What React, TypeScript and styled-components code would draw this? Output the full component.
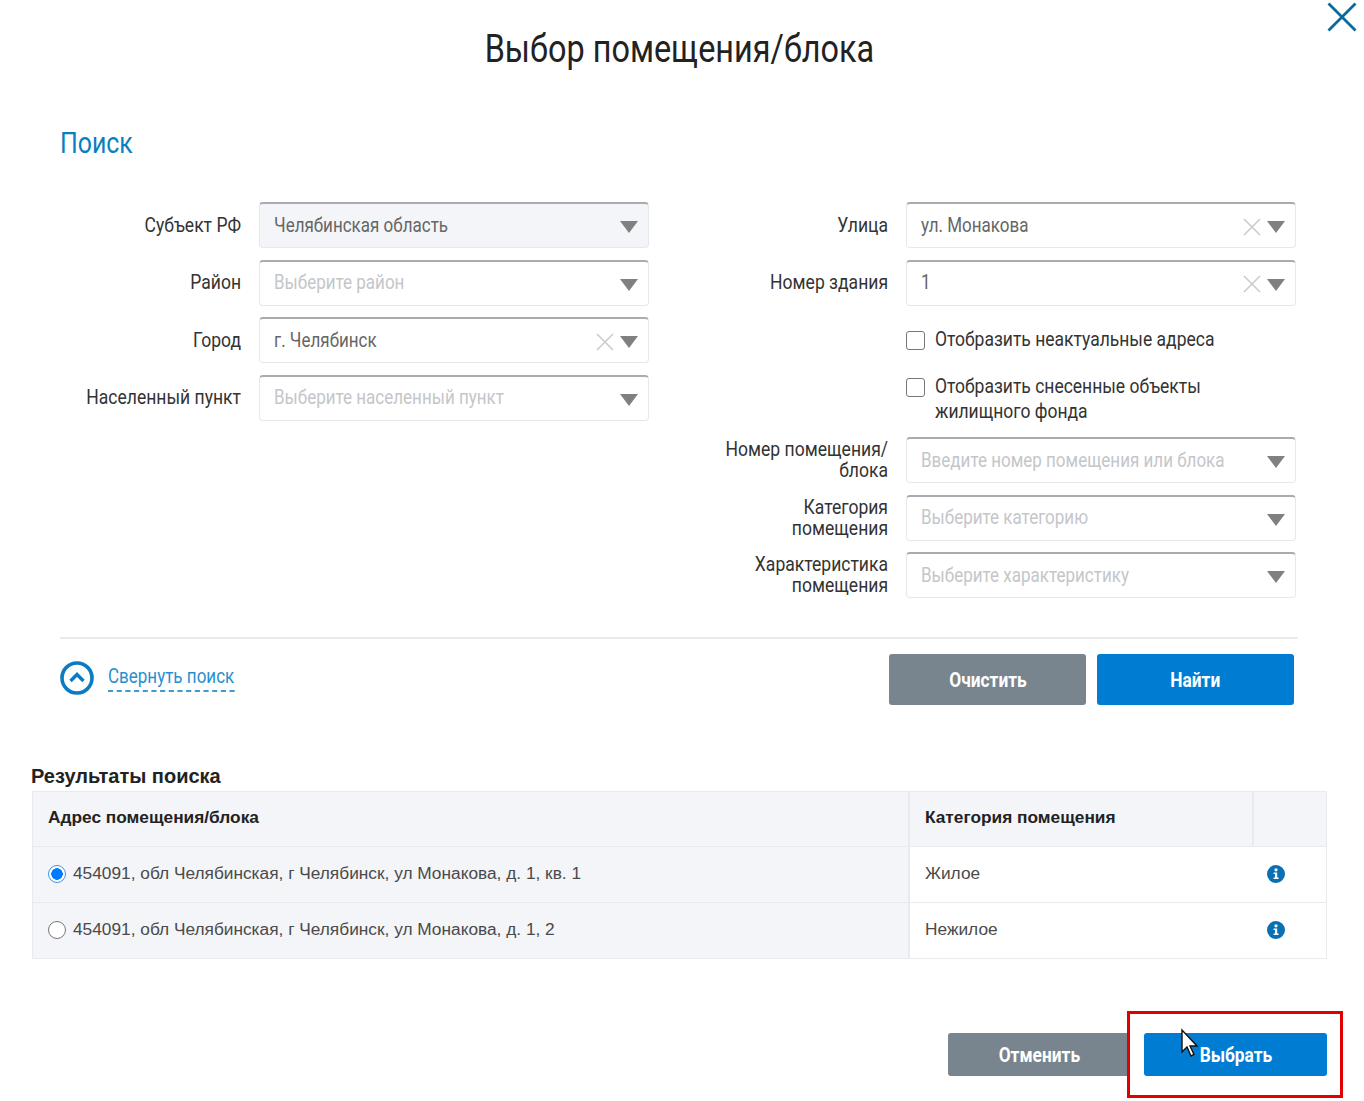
import { Fragment } from 'react';
import styled, { createGlobalStyle } from 'styled-components';

const GlobalStyle = createGlobalStyle`
  html, body {
    margin: 0;
    padding: 0;
    background: #fff;
  }
  body {
    font-family: Roboto, "Liberation Sans", sans-serif;
    color: #333;
  }
`;

const Page = styled.div`
  position: relative;
  width: 1364px;
  height: 1101px;
  overflow: hidden;
  background: #fff;
`;

const CloseButton = styled.div`
  position: absolute;
  top: 2px;
  right: 7px;
  width: 30px;
  height: 30px;
  color: #0b6a9b;
`;

// the screenshot was squeezed horizontally, so the text is narrowed to match
const Title = styled.h1`
  margin: 0;
  height: 100px;
  padding: 27px 6px 0 0;
  box-sizing: border-box;
  text-align: center;
  font: 400 38px/44px Roboto, sans-serif;
  color: #222;
  transform: scaleX(0.853);
`;

const SearchSection = styled.section`
  margin: 0 66px 0 60px;
`;

const SectionTitle = styled.h2`
  margin: 0;
  height: 102px;
  padding-top: 25px;
  box-sizing: border-box;
  font: 400 29px/36px Roboto, sans-serif;
  color: #0a7fc0;
  transform: scaleX(0.857);
  transform-origin: left center;
`;

const FormGrid = styled.div`
  display: grid;
  grid-template-columns: 588px 1fr;
  column-gap: 59px;
  height: 435px;
`;

const Column = styled.div`
  display: flex;
  flex-direction: column;
`;

const FieldRow = styled.div`
  display: flex;
  align-items: center;
  height: 46px;
  margin-bottom: 11.6px;
`;

const Label = styled.label`
  width: 205px;
  margin: 0 18px 0 -24px;
  flex: none;
  text-align: right;
  font: 400 21px/21px Roboto, sans-serif;
  color: #333;
  transform: scaleX(0.835);
  transform-origin: right center;
`;

const SelectBox = styled.div<{ $disabled?: boolean }>`
  flex: none;
  display: flex;
  align-items: center;
  width: 390px;
  height: 46px;
  box-sizing: border-box;
  padding: 0 10px 0 14px;
  border: 1px solid #e6e8ec;
  border-top: 2px solid #a9abb0;
  border-radius: 4px;
  background: ${({ $disabled }) => ($disabled ? '#f3f5f9' : '#fff')};
`;

const Value = styled.span<{ $placeholder?: boolean }>`
  flex: 1;
  min-width: 0;
  padding-bottom: 2px;
  white-space: nowrap;
  font: 400 20px/22px Roboto, sans-serif;
  color: ${({ $placeholder }) => ($placeholder ? '#c4c6ca' : '#666')};
  transform: scaleX(0.85);
  transform-origin: left center;
`;

const ClearIcon = styled.svg`
  width: 20px;
  height: 20px;
  margin: 2px 5px 0 0;
  color: #c9cbce;
`;

const Arrow = styled.span`
  width: 0;
  height: 0;
  margin-top: 3px;
  border-left: 9px solid transparent;
  border-right: 9px solid transparent;
  border-top: 12px solid #808080;
`;

const CheckRow = styled.label<{ $top: number; $gap: number }>`
  display: flex;
  align-items: flex-start;
  margin: ${({ $top }) => $top}px 0 ${({ $gap }) => $gap}px 199px;
`;

const CheckText = styled.span`
  white-space: nowrap;
  font: 400 21px/25px Roboto, sans-serif;
  color: #333;
  transform: scaleX(0.833);
  transform-origin: left center;
`;

const CheckBox = styled.span`
  flex: none;
  width: 17px;
  height: 17px;
  margin: 4px 10px 0 0;
  border: 1px solid #767676;
  border-radius: 3px;
`;

const Divider = styled.hr`
  margin: 0;
  border: none;
  border-top: 2px solid #e8eaed;
`;

const ActionBar = styled.div`
  display: flex;
  align-items: center;
  padding-top: 15px;
  height: 51px;
`;

const Collapse = styled.div`
  display: flex;
  align-items: center;
  gap: 14px;
  flex: 1;
  margin-top: -3px;
`;

const CollapseLink = styled.a`
  padding-bottom: 3px;
  border-bottom: 2px dashed #3d9ad1;
  font: 400 20px/22px Roboto, sans-serif;
  color: #2a8fcc;
  transform: scaleX(0.85);
  transform-origin: left center;
`;

const ButtonGroup = styled.div`
  display: flex;
  gap: 11px;
  margin-right: 4px;
`;

const Button = styled.button<{ $primary?: boolean; $w: number; $h: number }>`
  width: ${({ $w }) => $w}px;
  height: ${({ $h }) => $h}px;
  padding: 0;
  border: none;
  border-radius: 3px;
  background: ${({ $primary }) => ($primary ? '#007dd3' : '#78858e')};
  color: #fff;
`;

const ButtonText = styled.span`
  display: inline-block;
  font: 700 21px/24px Roboto, sans-serif;
  transform: scaleX(0.825);
`;

const Results = styled.section`
  margin: 58px 37px 0 31px;
`;

const ResultsTitle = styled.h3`
  margin: 0;
  height: 28px;
  font: 700 20px/26px "Liberation Sans", Arial, sans-serif;
  color: #222;
`;

const Table = styled.div`
  display: grid;
  grid-template-columns: 877px 344px 1fr;
  grid-template-rows: 55px 56px 56px;
  margin-left: 1px;
  border: 1px solid #e8eaee;
  border-top: none;
  font: 400 17.3px/20px "Liberation Sans", Arial, sans-serif;
`;

const Cell = styled.div<{ $head?: boolean; $tint?: boolean; $plain?: boolean }>`
  display: flex;
  align-items: center;
  padding: 0 14px 4px 15px;
  box-sizing: border-box;
  border-top: 1px solid #e8eaee;
  border-right: ${({ $plain }) => ($plain ? 'none' : '2px solid #e8eaee')};
  background: ${({ $head, $tint }) => ($head || $tint ? '#f3f5f9' : '#fff')};
  color: ${({ $head }) => ($head ? '#222' : '#4a4a4a')};
  font-weight: ${({ $head }) => ($head ? 700 : 400)};
`;

const Radio = styled.span<{ $checked?: boolean }>`
  flex: none;
  width: 18px;
  height: 18px;
  margin: 2px 7px 0 0;
  box-sizing: border-box;
  border-radius: 50%;
  background: ${({ $checked }) =>
    $checked ? 'radial-gradient(circle, #007bff 0 5.5px, #fff 6px)' : '#fff'};
  border: ${({ $checked }) => ($checked ? '1.5px solid #3a95e8' : '1px solid #767676')};
`;

const InfoIcon = styled.svg`
  width: 18px;
  height: 18px;
  margin: 2px 0 0 -2px;
  color: #0b6fb3;
`;

const Footer = styled.div`
  display: flex;
  justify-content: flex-end;
  gap: 14px;
  margin: 74px 37px 0 0;
`;

const Highlight = styled.div`
  position: absolute;
  top: 1011px;
  left: 1127px;
  width: 216px;
  height: 87px;
  box-sizing: border-box;
  border: 3px solid #e10000;
`;

const Cursor = styled.svg`
  position: absolute;
  top: 1028px;
  left: 1180px;
  width: 20px;
  height: 30px;
`;

const Close = () => (
  <svg viewBox="0 0 30 30" width="30" height="30" fill="none" stroke="currentColor" strokeWidth="2.8">
    <path d="M1.5 1.5 28.5 28.5M28.5 1.5 1.5 28.5" />
  </svg>
);

const Select = ({
  value,
  placeholder,
  clear,
  disabled,
}: {
  value?: string;
  placeholder?: string;
  clear?: boolean;
  disabled?: boolean;
}) => (
  <SelectBox $disabled={disabled}>
    <Value $placeholder={!value}>{value || placeholder}</Value>
    {clear && (
      <ClearIcon viewBox="0 0 20 20" fill="none" stroke="currentColor" strokeWidth="1.6">
        <path d="M2 2 18 18M18 2 2 18" />
      </ClearIcon>
    )}
    <Arrow />
  </SelectBox>
);

const Info = () => (
  <InfoIcon viewBox="0 0 18 18">
    <circle cx="9" cy="9" r="9" fill="currentColor" />
    <circle cx="9" cy="4.8" r="1.6" fill="#fff" />
    <path d="M6.6 7.4h3.6v5h1.4v1.6H6.6v-1.6H8V9H6.6z" fill="#fff" />
  </InfoIcon>
);

const leftFields = [
  { label: 'Субъект РФ', value: 'Челябинская область', disabled: true },
  { label: 'Район', placeholder: 'Выберите район' },
  { label: 'Город', value: 'г. Челябинск', clear: true },
  { label: 'Населенный пункт', placeholder: 'Выберите населенный пункт' },
];

const rightTop = [
  { label: 'Улица', value: 'ул. Монакова', clear: true },
  { label: 'Номер здания', value: '1', clear: true },
];

const rightBottom = [
  { label: 'Номер помещения/ блока', placeholder: 'Введите номер помещения или блока' },
  { label: 'Категория помещения', placeholder: 'Выберите категорию' },
  { label: 'Характеристика помещения', placeholder: 'Выберите характеристику' },
];

const rows = [
  { address: '454091, обл Челябинская, г Челябинск, ул Монакова, д. 1, кв. 1', category: 'Жилое', checked: true },
  { address: '454091, обл Челябинская, г Челябинск, ул Монакова, д. 1, 2', category: 'Нежилое' },
];

export default function App() {
  return (
    <Page>
      <GlobalStyle />
      <CloseButton>
        <Close />
      </CloseButton>
      <Title>Выбор помещения/блока</Title>

      <SearchSection>
        <SectionTitle>Поиск</SectionTitle>
        <FormGrid>
          <Column>
            {leftFields.map((f) => (
              <FieldRow key={f.label}>
                <Label>{f.label}</Label>
                <Select value={f.value} placeholder={f.placeholder} clear={f.clear} disabled={f.disabled} />
              </FieldRow>
            ))}
          </Column>
          <Column>
            {rightTop.map((f) => (
              <FieldRow key={f.label}>
                <Label>{f.label}</Label>
                <Select value={f.value} clear={f.clear} />
              </FieldRow>
            ))}
            <CheckRow $top={10} $gap={22}>
              <CheckBox />
              <CheckText>Отобразить неактуальные адреса</CheckText>
            </CheckRow>
            <CheckRow $top={0} $gap={13}>
              <CheckBox />
              <CheckText>
                Отобразить снесенные объекты
                <br />
                жилищного фонда
              </CheckText>
            </CheckRow>
            {rightBottom.map((f) => (
              <FieldRow key={f.label}>
                <Label>{f.label}</Label>
                <Select placeholder={f.placeholder} />
              </FieldRow>
            ))}
          </Column>
        </FormGrid>
        <Divider />
        <ActionBar>
          <Collapse>
            <svg width="34" height="34" viewBox="0 0 34 34" fill="none" stroke="#0b7cc1">
              <circle cx="17" cy="17" r="15" strokeWidth="3.6" />
              <path d="M10.5 20 17 13.5 23.5 20" strokeWidth="3.4" />
            </svg>
            <CollapseLink>Свернуть поиск</CollapseLink>
          </Collapse>
          <ButtonGroup>
            <Button $w={197} $h={51}>
              <ButtonText>Очистить</ButtonText>
            </Button>
            <Button $primary $w={197} $h={51}>
              <ButtonText>Найти</ButtonText>
            </Button>
          </ButtonGroup>
        </ActionBar>
      </SearchSection>

      <Results>
        <ResultsTitle>Результаты поиска</ResultsTitle>
        <Table>
          <Cell $head>Адрес помещения/блока</Cell>
          <Cell $head>Категория помещения</Cell>
          <Cell $head $plain />
          {rows.map((r) => (
            <Fragment key={r.address}>
              <Cell $tint>
                <Radio $checked={r.checked} />
                {r.address}
              </Cell>
              <Cell $plain>{r.category}</Cell>
              <Cell $plain>
                <Info />
              </Cell>
            </Fragment>
          ))}
        </Table>
      </Results>

      <Footer>
        <Button $w={182} $h={43}>
          <ButtonText>Отменить</ButtonText>
        </Button>
        <Button $primary $w={183} $h={43}>
          <ButtonText>Выбрать</ButtonText>
        </Button>
      </Footer>

      <Highlight />
      <Cursor viewBox="0 0 20 30">
        <path d="M2 2v22l5-5 4 9 3-1.5-4-8.5h7z" fill="#fff" stroke="#111" strokeWidth="1.4" />
      </Cursor>
    </Page>
  );
}
